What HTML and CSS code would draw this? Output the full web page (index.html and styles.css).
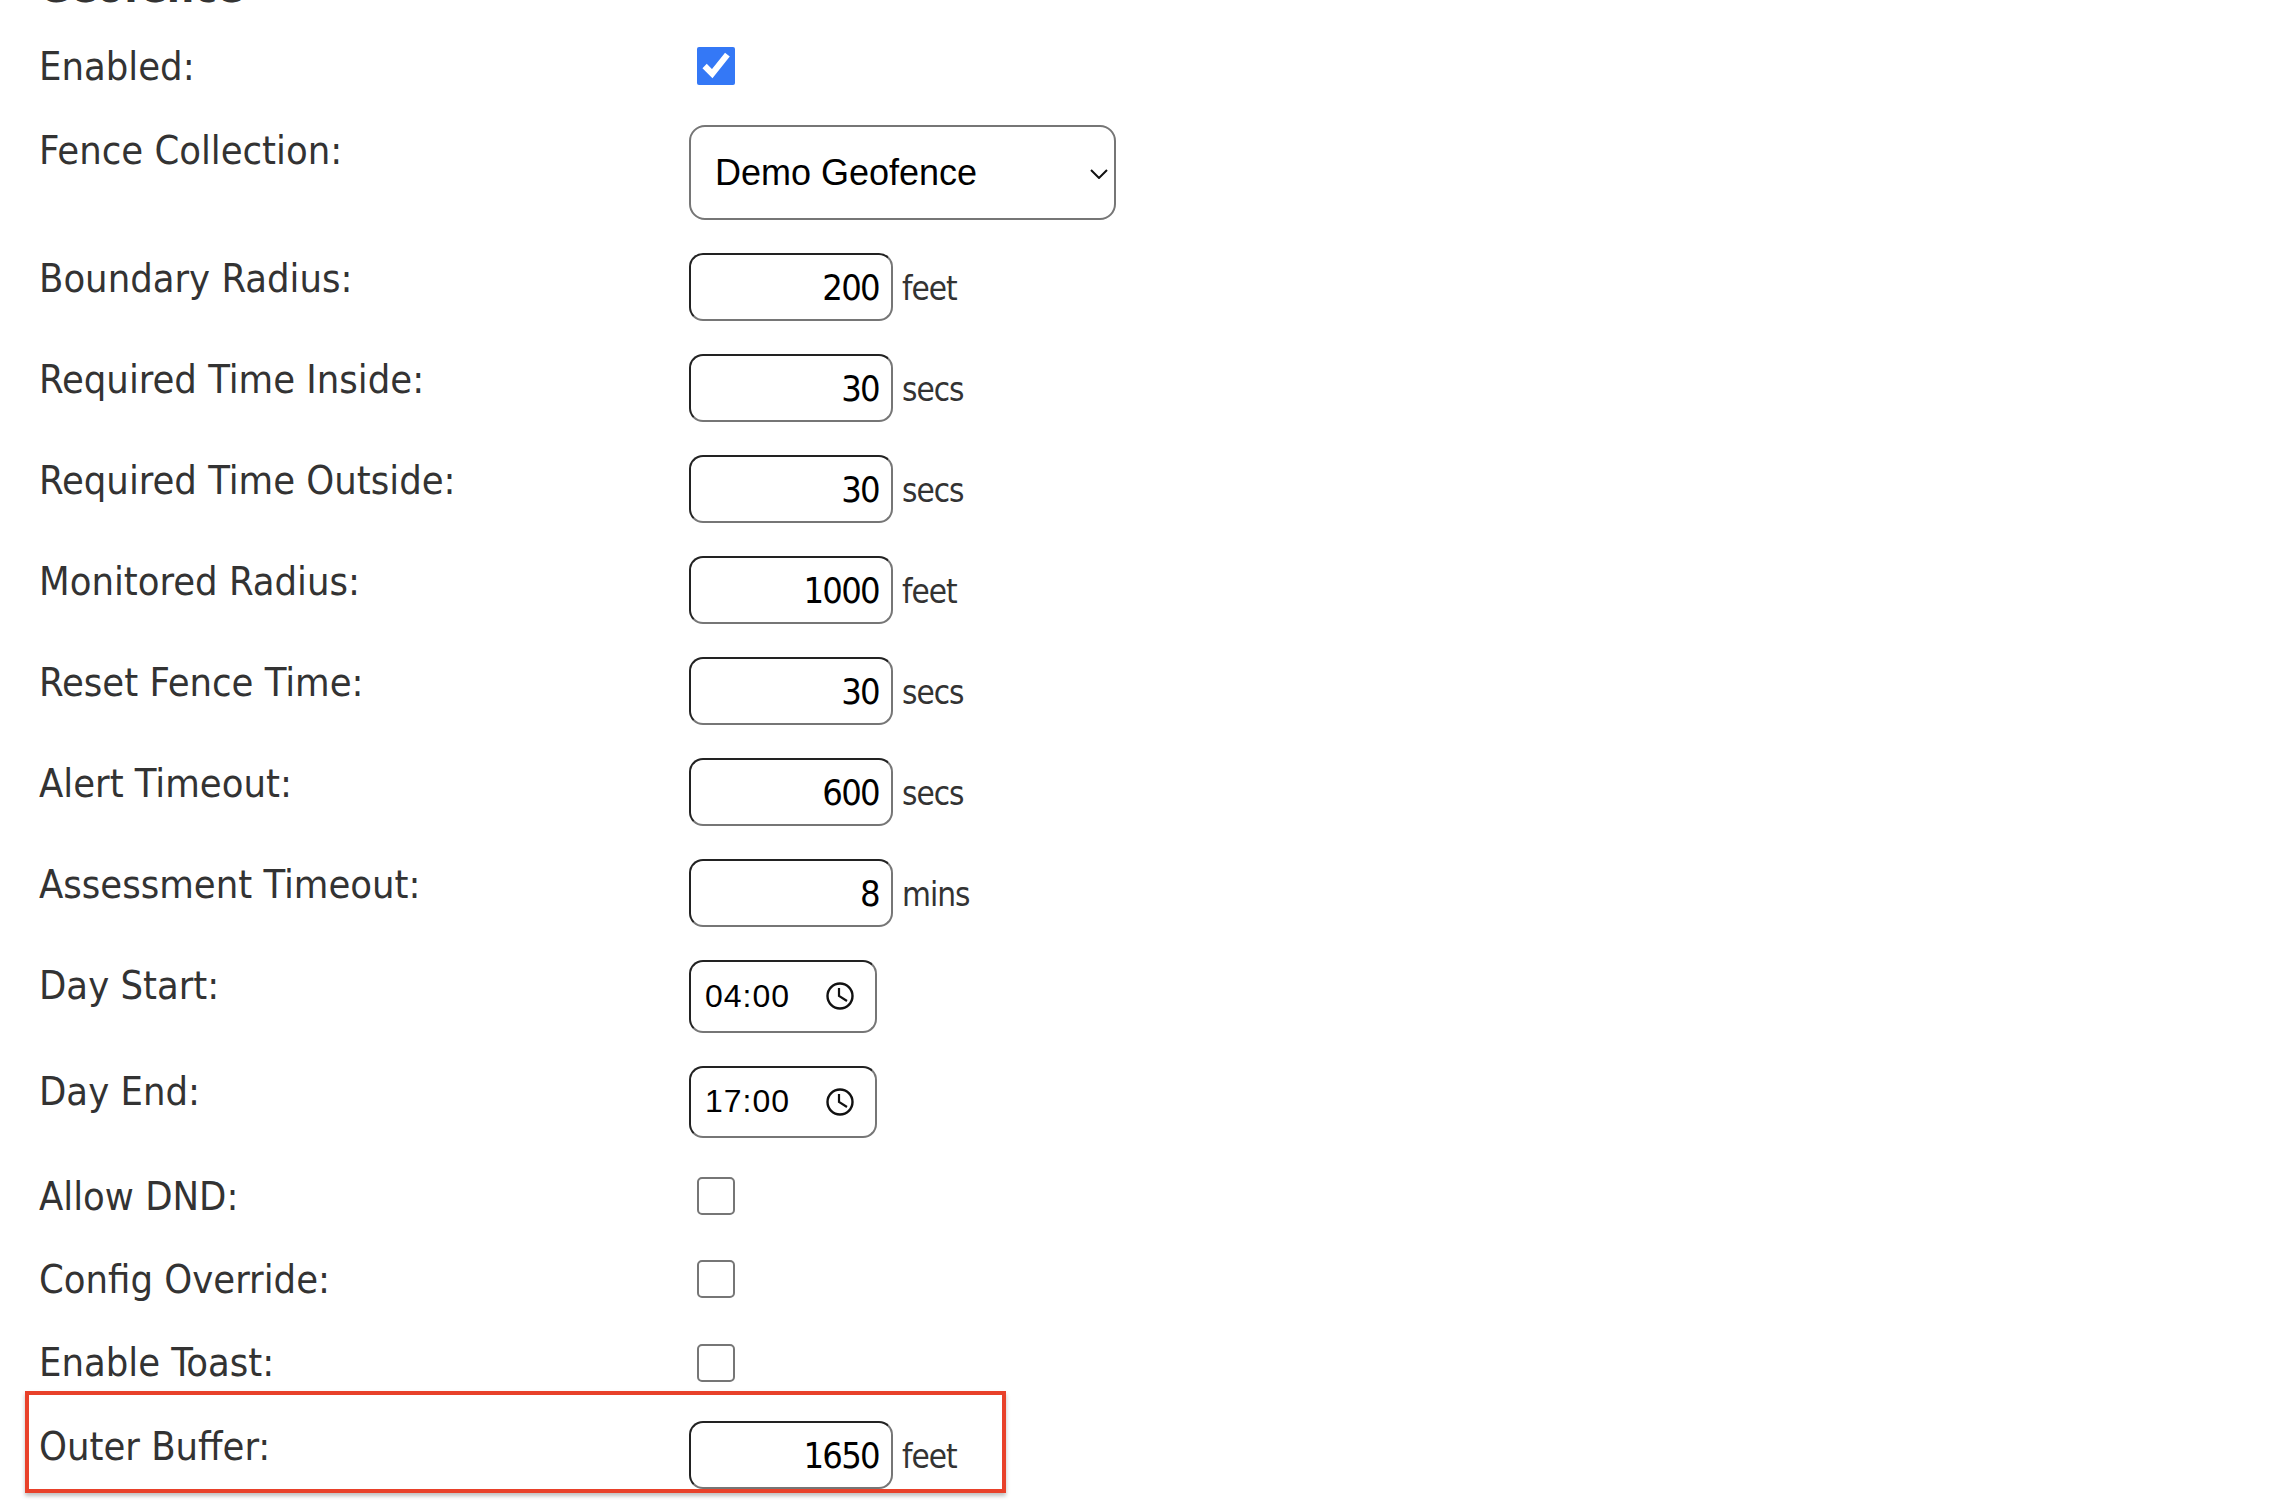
FILE: index.html
```html
<!DOCTYPE html>
<html lang="en">
<head>
<meta charset="utf-8">
<title>Geofence</title>
<link rel="stylesheet" href="styles.css">
</head>
<body>
<main class="page">
  <h2 class="title">Geofence</h2>
  <form class="form">
    <label class="label">Enabled:</label>
    <div class="value tall"><input class="check check-lead" type="checkbox" checked></div>

    <label class="label">Fence Collection:</label>
    <div class="value">
      <div class="select-wrap">
        <select class="select"><option>Demo Geofence</option></select>
        <svg class="chevron" viewBox="0 0 18 10" width="18" height="10" aria-hidden="true"><path d="M1 1l8 8 8-8" fill="none" stroke="#111" stroke-width="2"/></svg>
      </div>
    </div>

    <label class="label">Boundary Radius:</label>
    <div class="value"><input class="num" type="text" value="200"><span class="unit">feet</span></div>

    <label class="label">Required Time Inside:</label>
    <div class="value"><input class="num" type="text" value="30"><span class="unit">secs</span></div>

    <label class="label">Required Time Outside:</label>
    <div class="value"><input class="num" type="text" value="30"><span class="unit">secs</span></div>

    <label class="label">Monitored Radius:</label>
    <div class="value"><input class="num" type="text" value="1000"><span class="unit">feet</span></div>

    <label class="label">Reset Fence Time:</label>
    <div class="value"><input class="num" type="text" value="30"><span class="unit">secs</span></div>

    <label class="label">Alert Timeout:</label>
    <div class="value"><input class="num" type="text" value="600"><span class="unit">secs</span></div>

    <label class="label">Assessment Timeout:</label>
    <div class="value"><input class="num" type="text" value="8"><span class="unit">mins</span></div>

    <label class="label">Day Start:</label>
    <div class="value">
      <div class="time"><span>04:00</span>
        <svg class="clock" viewBox="0 0 28 28" width="28" height="28" aria-hidden="true"><circle cx="14" cy="14" r="12.5" fill="none" stroke="#111" stroke-width="2.4"/><path d="M13 6v8l8 5" fill="none" stroke="#111" stroke-width="2.2"/></svg>
      </div>
    </div>

    <label class="label">Day End:</label>
    <div class="value">
      <div class="time"><span>17:00</span>
        <svg class="clock" viewBox="0 0 28 28" width="28" height="28" aria-hidden="true"><circle cx="14" cy="14" r="12.5" fill="none" stroke="#111" stroke-width="2.4"/><path d="M13 6v8l8 5" fill="none" stroke="#111" stroke-width="2.2"/></svg>
      </div>
    </div>

    <label class="label">Allow DND:</label>
    <div class="value"><input class="check" type="checkbox"></div>

    <label class="label">Config Override:</label>
    <div class="value"><input class="check" type="checkbox"></div>

    <label class="label">Enable Toast:</label>
    <div class="value tall"><input class="check" type="checkbox"></div>

    <label class="label">Outer Buffer:</label>
    <div class="value"><input class="num" type="text" value="1650"><span class="unit">feet</span></div>
  </form>
  <div class="highlight"></div>
</main>
</body>
</html>
```
FILE: styles.css
```css
html, body {
  margin: 0;
  height: 100%;
  background: #fff;
  overflow: hidden;
}
.page {
  display: flow-root;
  position: relative;
  height: 1500px;
  padding-left: 39px;
  font-family: "DejaVu Sans", sans-serif;
  font-stretch: condensed;
  color: #333;
}
.title {
  margin: -38px 0 29px;
  height: 50px;
  font-size: 43px;
  line-height: 50px;
  font-weight: 700;
}
.form {
  display: grid;
  grid-template-columns: 650px auto;
  justify-content: start;
  row-gap: 33px;
}
.label {
  height: 50px;
  font-size: 39.5px;
  line-height: 51px;
  letter-spacing: 0;
}
.value {
  display: flex;
  align-items: center;
  gap: 9px;
  min-height: 50px;
}
.tall {
  min-height: 51px;
}
.check {
  box-sizing: border-box;
  width: 38px;
  height: 38px;
  margin: 0 0 0 8px;
  accent-color: #3478f6;
}
.check-lead {
  margin-bottom: 1px;
}
.check:not(:checked) {
  appearance: none;
  background: #fff;
  border: 2px solid #767676;
  border-radius: 5px;
}
.select-wrap {
  position: relative;
  display: flex;
}
.chevron {
  position: absolute;
  right: 8px;
  top: 44px;
  pointer-events: none;
}
.select {
  appearance: none;
  box-sizing: border-box;
  width: 427px;
  height: 95px;
  padding: 0 24px;
  background: #fff;
  color: #000;
  font-family: "Liberation Sans", Arial, sans-serif;
  font-size: 36px;
  border: 2px solid #767676;
  border-radius: 16px;
}
.num {
  box-sizing: border-box;
  width: 204px;
  height: 68px;
  padding: 0 12px;
  background: #fff;
  color: #000;
  font-family: "DejaVu Sans", sans-serif;
  font-stretch: condensed;
  font-size: 36px;
  letter-spacing: -1.7px;
  text-align: right;
  border: 2px solid;
  border-color: #222 #767676 #767676 #222;
  border-radius: 14px;
}
.time {
  box-sizing: border-box;
  display: flex;
  align-items: center;
  justify-content: space-between;
  width: 188px;
  height: 72.5px;
  padding: 0 21px 0 14px;
  background: #fff;
  color: #000;
  font-family: "Liberation Sans", Arial, sans-serif;
  font-size: 32px;
  letter-spacing: 1px;
  border: 2px solid;
  border-color: #222 #767676 #767676 #222;
  border-radius: 14px;
}
.clock {
  flex: none;
}
.unit {
  font-size: 33px;
  letter-spacing: -1px;
  color: #333;
  padding-top: 2px;
}
.highlight {
  position: absolute;
  left: 25px;
  top: 1391px;
  width: 981px;
  height: 102px;
  box-sizing: border-box;
  border: 4px solid #e8412a;
  box-shadow: 0 3px 4px rgba(0, 0, 0, 0.25);
}
```
